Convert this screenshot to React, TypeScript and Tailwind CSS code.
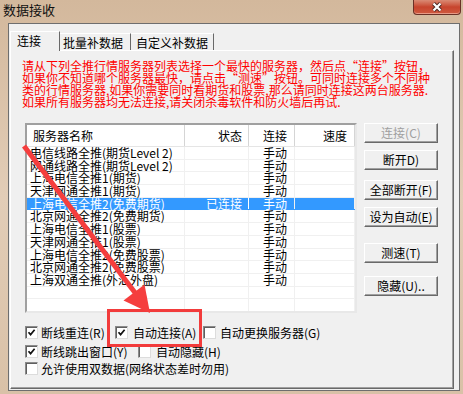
import React from 'react';

const servers = [
  '电信线路全推(期货Level 2)',
  '网通线路全推(期货Level 2)',
  '上海电信全推1(期货)',
  '天津网通全推1(期货)',
  '上海电信全推2(免费期货)',
  '北京网通全推2(免费期货)',
  '上海电信全推1(股票)',
  '天津网通全推1(股票)',
  '上海电信全推2(免费股票)',
  '北京网通全推2(免费股票)',
  '上海双通全推(外汇外盘)',
  '',
  '',
];

const SELECTED = 4;

const Check = ({ checked }: { checked: boolean }) => (
  <div className="w-[13px] h-[13px] shrink-0 bg-white border border-t-[#8a8a8a] border-l-[#8a8a8a] border-r-[#dcdcdc] border-b-[#dcdcdc] shadow-[inset_1px_1px_0_#5f5f5f] flex items-center justify-center">
    {checked && (
      <svg width="9" height="9" viewBox="0 0 9 9">
        <path d="M1.5 4.2 L3.6 6.6 L7.6 1.8" fill="none" stroke="#111" strokeWidth="1.7" />
      </svg>
    )}
  </div>
);

const Btn = ({ children, className = '', disabled = false }: { children: React.ReactNode; className?: string; disabled?: boolean }) => (
  <div
    className={`h-[20px] w-[74px] flex items-center justify-center bg-[#f0f0f0] border border-t-white border-l-white border-r-[#696969] border-b-[#696969] shadow-[inset_-1px_-1px_0_#a0a0a0] leading-none ${disabled ? 'text-[#a0a0a0]' : 'text-black'} ${className}`}
  >
    {children}
  </div>
);

export default function App() {
  return (
    <div className="relative w-[463px] h-[394px] flex flex-col bg-gradient-to-b from-[#d3b89c] via-[#e2cdb7] to-[#d9c1a7] font-['Noto_Sans_CJK_SC',sans-serif] text-[12px] text-black overflow-hidden">
      {/* title bar */}
      <div className="h-[23px] flex items-start justify-between pl-[3px] pr-[2px]">
        <span className="mt-[2px] text-[13px] leading-[16px] text-[#111]">数据接收</span>
        <div className="w-[48px] h-[15px] rounded-b-[4px] border border-t-0 border-[#6a3026] bg-gradient-to-b from-[#d98a74] via-[#c7442d] to-[#cf5a40] shadow-[inset_0_-1px_0_#e89a86] flex items-center justify-center">
          <svg width="14" height="10" viewBox="0 0 14 10">
            <path d="M3.5 1.5 L10.5 8.5 M10.5 1.5 L3.5 8.5" stroke="#4a2a26" strokeWidth="4" />
            <path d="M3.5 1.5 L10.5 8.5 M10.5 1.5 L3.5 8.5" stroke="#ffffff" strokeWidth="2.2" />
          </svg>
        </div>
      </div>

      {/* window body */}
      <div className="flex-1 ml-[8px] mr-[3px] mb-[3px] border border-[#6e6e6e] bg-[#f0f0f0] pl-[1px] pr-[5px] pt-[7px] pb-[1px] flex flex-col">
        {/* tabs */}
        <div className="h-[19px] flex items-end">
          <div className="relative z-10 -mb-px h-[20px] w-[50px] pl-[6px] pt-[2px] bg-[#f0f0f0] border-t border-l border-white border-r border-r-[#696969] leading-[14px]">
            连接
          </div>
          <div className="h-[17px] w-[71px] pl-[3px] pt-[2px] border-t border-white border-r border-r-[#696969] leading-[13px]">
            批量补数据
          </div>
          <div className="h-[17px] w-[83px] pl-[5px] pt-[2px] border-t border-white border-r border-r-[#696969] leading-[13px]">
            自定义补数据
          </div>
        </div>

        {/* tab panel */}
        <div className="flex-1 border border-t-white border-l-white border-r-[#696969] border-b-[#696969] shadow-[inset_-1px_-1px_0_#a0a0a0] pl-0 pt-[9px] flex flex-col">
          <div className="pl-[11px] text-[#ff0000] leading-[12px] whitespace-nowrap">
            <div>请从下列全推行情服务器列表选择一个最快的服务器，然后点“连接”按钮，</div>
            <div>如果你不知道哪个服务器最快，请点击“测速”按钮。可同时连接多个不同种</div>
            <div>类的行情服务器,如果你需要同时看期货和股票,那么请同时连接这两台服务器.</div>
            <div>如果所有服务器均无法连接,请关闭杀毒软件和防火墙后再试.</div>
          </div>

          <div className="flex mt-[15px] ml-[14px]">
            {/* server list */}
            <div className="w-[332px] h-[190px] border-2 border-t-[#a0a0a0] border-l-[#a0a0a0] border-r-[#e8e8e8] border-b-[#e8e8e8] bg-white overflow-hidden">
              <div className="h-[22px] flex border-b border-[#e5e5e5] bg-white">
                <div className="w-[158px] pl-[6px] flex items-center border-r border-[#d5d5d5]">服务器名称</div>
                <div className="w-[64px] pr-[6px] flex items-center justify-end border-r border-[#d5d5d5]">状态</div>
                <div className="w-[46px] pl-[14px] flex items-center border-r border-[#d5d5d5]">连接</div>
                <div className="w-[60px] pr-[7px] flex items-center justify-end border-r border-[#d5d5d5]">速度</div>
              </div>
              {servers.map((name, i) => {
                const sel = i === SELECTED;
                return (
                  <div
                    key={i}
                    className={`flex h-[12.7px] leading-[12px] border-b whitespace-nowrap ${sel ? 'bg-[#3399ff] text-white border-[#3399ff]' : 'border-[#f0f0f0]'}`}
                  >
                    <div className={`w-[158px] pl-[3px] border-r ${sel ? 'border-[#3399ff]' : 'border-[#f0f0f0]'}`}>{name}</div>
                    <div className={`w-[64px] pr-[6px] text-right border-r ${sel ? 'border-white' : 'border-[#f0f0f0]'}`}>{sel ? '已连接' : ''}</div>
                    <div className="w-[46px] pl-[14px] border-r border-[#f0f0f0]">{name ? '手动' : ''}</div>
                    <div className="w-[60px] border-r border-[#f0f0f0]"></div>
                  </div>
                );
              })}
            </div>

            {/* buttons */}
            <div className="ml-[7px] flex flex-col">
              <Btn disabled>连接(C)</Btn>
              <Btn className="mt-[7px]">断开D)</Btn>
              <Btn className="mt-[10px]">全部断开(F)</Btn>
              <Btn className="mt-[7px]">设为自动(E)</Btn>
              <Btn className="mt-[16px]">测速(T)</Btn>
              <Btn className="mt-[13px]">隐藏(U)..</Btn>
            </div>
          </div>

          {/* options */}
          <div className="mt-[11px] pl-[14px] flex flex-col whitespace-nowrap leading-[14px]">
            <div className="h-[17px] flex items-center">
              <div className="w-[90px] flex items-center gap-[3px]"><Check checked /><span>断线重连(R)</span></div>
              <div className="w-[88px] flex items-center gap-[5px]"><Check checked /><span>自动连接(A)</span></div>
              <div className="flex items-center gap-[4px]"><Check checked={false} /><span>自动更换服务器(G)</span></div>
            </div>
            <div className="h-[17px] mt-[2px] flex items-center">
              <div className="w-[113px] flex items-center gap-[3px]"><Check checked /><span>断线跳出窗口(Y)</span></div>
              <div className="flex items-center gap-[5px]"><Check checked={false} /><span>自动隐藏(H)</span></div>
            </div>
            <div className="h-[17px] flex items-center">
              <div className="flex items-center gap-[3px]"><Check checked={false} /><span>允许使用双数据(网络状态差时勿用)</span></div>
            </div>
          </div>
        </div>
      </div>

      {/* annotation overlays */}
      <div className="absolute left-[107px] top-[309px] w-[95px] h-[38px] border-[3px] border-[#f23b3b] pointer-events-none" />
      <svg className="absolute left-0 top-0 pointer-events-none" width="463" height="394" viewBox="0 0 463 394">
        <line x1="24" y1="146" x2="136" y2="294" stroke="#f53e3e" strokeWidth="5" />
        <polygon points="150,313 123.5,300.5 144.5,284.5" fill="#f53e3e" />
      </svg>
    </div>
  );
}
